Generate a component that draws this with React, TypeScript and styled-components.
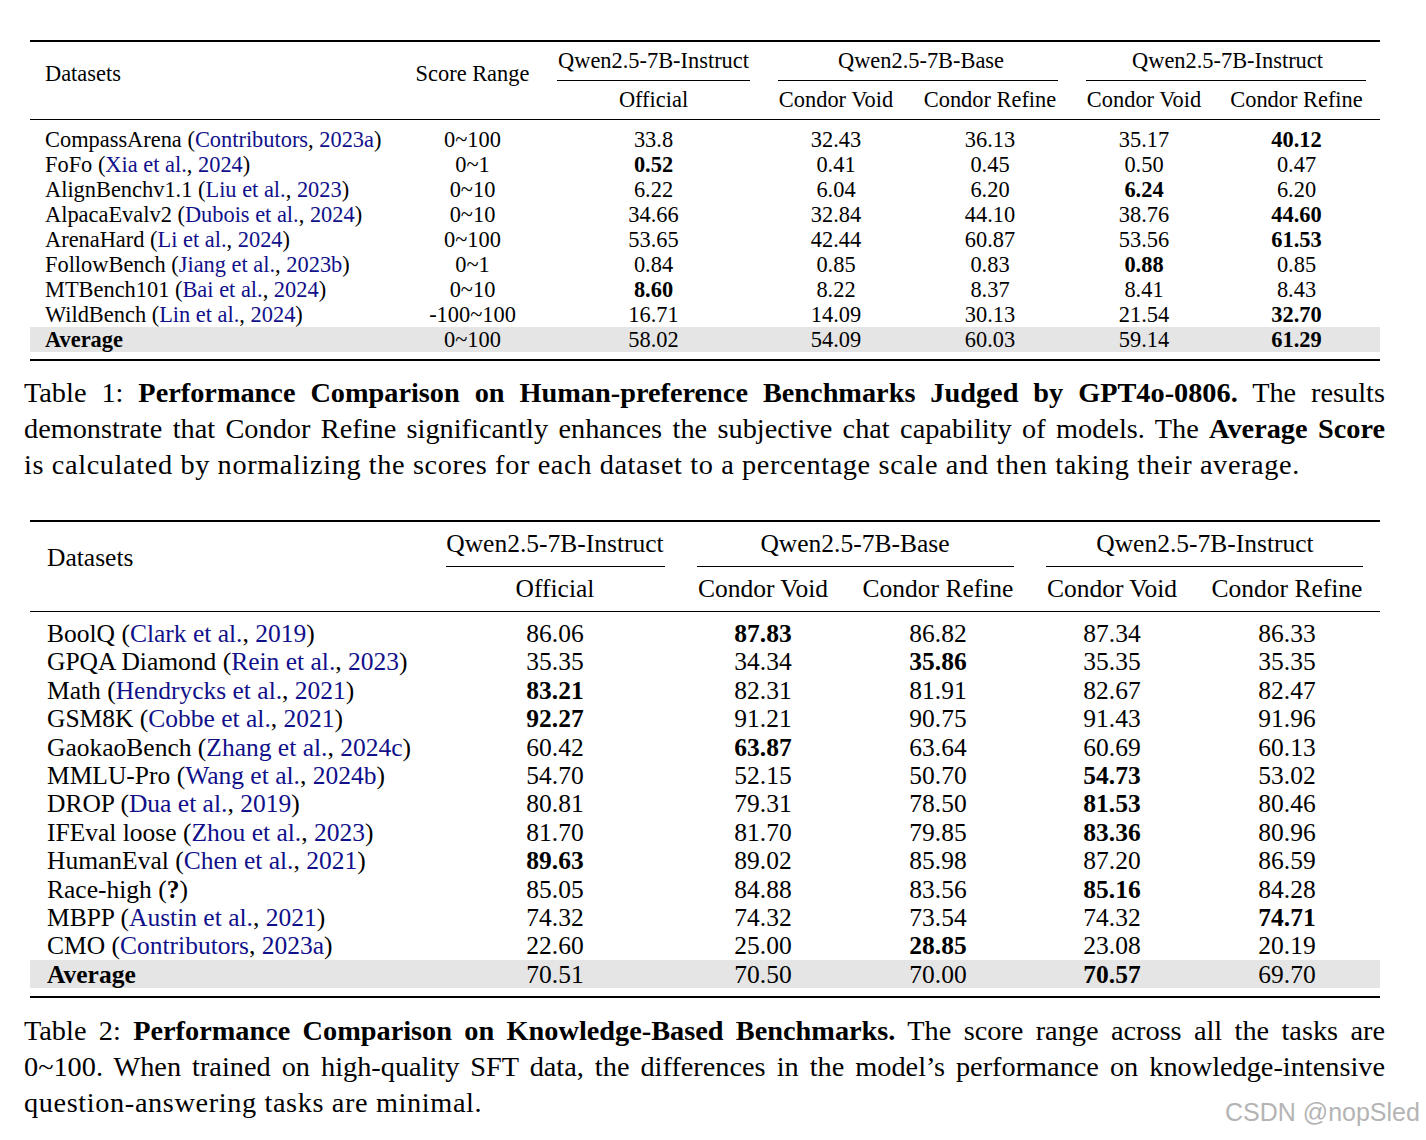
import styled, { createGlobalStyle } from "styled-components";

const GlobalStyle = createGlobalStyle`
  html, body {
    margin: 0;
    padding: 0;
    background: #ffffff;
  }
  body {
    font-family: "Liberation Serif", "Times New Roman", serif;
    color: #000000;
  }
`;

const Page = styled.div`
  position: relative;
  width: 1426px;
  height: 1140px;
  padding-top: 40px;
  box-sizing: border-box;
  overflow: hidden;
`;

const Table = styled.div<{ $size: number; $gap?: number }>`
  width: 1350px;
  margin: ${(p) => p.$gap || 0}px 0 0 30px;
  border-top: 2px solid #000;
  border-bottom: 2px solid #000;
  font-size: ${(p) => p.$size}px;
`;

const Head = styled.div<{ $cols: string; $row: number }>`
  display: grid;
  grid-template-columns: ${(p) => p.$cols};
  grid-template-rows: ${(p) => p.$row}px 1px ${(p) => p.$row}px;
  border-bottom: 1px solid #000;
`;

const HeadLabel = styled.div<{ $col: number; $top: number; $pad?: number }>`
  grid-column: ${(p) => p.$col};
  grid-row: 1 / 4;
  padding-top: ${(p) => p.$top}px;
  padding-left: ${(p) => p.$pad || 0}px;
  line-height: 26px;
  text-align: ${(p) => (p.$pad ? "left" : "center")};
  white-space: nowrap;
`;

const GroupTitle = styled.div<{ $span: string }>`
  grid-column: ${(p) => p.$span};
  grid-row: 1;
  display: flex;
  align-items: center;
  justify-content: center;
  white-space: nowrap;
`;

const CmidRule = styled.div<{ $span: string; $l: number; $r: number }>`
  grid-column: ${(p) => p.$span};
  grid-row: 2;
  margin: 0 ${(p) => p.$r}px 0 ${(p) => p.$l}px;
  background: #000;
`;

const SubTitle = styled.div<{ $col: number }>`
  grid-column: ${(p) => p.$col};
  grid-row: 3;
  display: flex;
  align-items: center;
  justify-content: center;
  white-space: nowrap;
`;

const Body = styled.div<{ $top: number; $bottom: number }>`
  padding: ${(p) => p.$top}px 0 ${(p) => p.$bottom}px;
`;

const Row = styled.div<{ $cols: string; $h: number; $shade?: boolean }>`
  display: grid;
  grid-template-columns: ${(p) => p.$cols};
  height: ${(p) => p.$h}px;
  align-items: center;
  background: ${(p) => (p.$shade ? "#e5e5e5" : "transparent")};
`;

const NameCell = styled.div<{ $pad: number; $bold?: boolean }>`
  padding-left: ${(p) => p.$pad}px;
  font-weight: ${(p) => (p.$bold ? 700 : 400)};
  white-space: nowrap;
`;

const Cell = styled.div<{ $bold?: boolean }>`
  text-align: center;
  font-weight: ${(p) => (p.$bold ? 700 : 400)};
  white-space: nowrap;
`;

const Cite = styled.span`
  color: #10108a;
`;

const Caption = styled.div<{ $gap: number }>`
  width: 1361px;
  margin: ${(p) => p.$gap}px 0 0 24px;
  font-size: 28.3px;
  line-height: 36px;
`;

const Line = styled.div<{ $last?: boolean }>`
  height: 36px;
  hyphens: none;
  text-align: ${(p) => (p.$last ? "left" : "justify")};
  text-align-last: ${(p) => (p.$last ? "left" : "justify")};
  letter-spacing: ${(p) => (p.$last ? "0.62px" : "0")};
  white-space: ${(p) => (p.$last ? "nowrap" : "normal")};
`;

const Watermark = styled.div`
  position: absolute;
  left: 1225px;
  top: 1097px;
  font-family: "Liberation Sans", Arial, sans-serif;
  font-size: 25px;
  line-height: 30px;
  color: #b4b4b4;
  white-space: nowrap;
`;

type Entry = {
  name: string;
  cite?: [string, string];
  unknown?: boolean;
  avg?: boolean;
  vals: (string | [string])[];
};

function DatasetName({ e }: { e: Entry }) {
  if (e.avg) return <>{e.name}</>;
  if (e.unknown)
    return (
      <>
        {e.name} (<b>?</b>)
      </>
    );
  return (
    <>
      {e.name} (<Cite>{e.cite![0]}</Cite>, <Cite>{e.cite![1]}</Cite>)
    </>
  );
}

const t1Cols = "375px 135px 227px 138px 170px 138px 167px";
const t2Cols = "400px 250px 166px 184px 164px 186px";

const t1Rows: Entry[] = [
  { name: "CompassArena", cite: ["Contributors", "2023a"], vals: ["0~100", "33.8", "32.43", "36.13", "35.17", ["40.12"]] },
  { name: "FoFo", cite: ["Xia et al.", "2024"], vals: ["0~1", ["0.52"], "0.41", "0.45", "0.50", "0.47"] },
  { name: "AlignBenchv1.1", cite: ["Liu et al.", "2023"], vals: ["0~10", "6.22", "6.04", "6.20", ["6.24"], "6.20"] },
  { name: "AlpacaEvalv2", cite: ["Dubois et al.", "2024"], vals: ["0~10", "34.66", "32.84", "44.10", "38.76", ["44.60"]] },
  { name: "ArenaHard", cite: ["Li et al.", "2024"], vals: ["0~100", "53.65", "42.44", "60.87", "53.56", ["61.53"]] },
  { name: "FollowBench", cite: ["Jiang et al.", "2023b"], vals: ["0~1", "0.84", "0.85", "0.83", ["0.88"], "0.85"] },
  { name: "MTBench101", cite: ["Bai et al.", "2024"], vals: ["0~10", ["8.60"], "8.22", "8.37", "8.41", "8.43"] },
  { name: "WildBench", cite: ["Lin et al.", "2024"], vals: ["-100~100", "16.71", "14.09", "30.13", "21.54", ["32.70"]] },
  { name: "Average", avg: true, vals: ["0~100", "58.02", "54.09", "60.03", "59.14", ["61.29"]] },
];

const t2Rows: Entry[] = [
  { name: "BoolQ", cite: ["Clark et al.", "2019"], vals: ["86.06", ["87.83"], "86.82", "87.34", "86.33"] },
  { name: "GPQA Diamond", cite: ["Rein et al.", "2023"], vals: ["35.35", "34.34", ["35.86"], "35.35", "35.35"] },
  { name: "Math", cite: ["Hendrycks et al.", "2021"], vals: [["83.21"], "82.31", "81.91", "82.67", "82.47"] },
  { name: "GSM8K", cite: ["Cobbe et al.", "2021"], vals: [["92.27"], "91.21", "90.75", "91.43", "91.96"] },
  { name: "GaokaoBench", cite: ["Zhang et al.", "2024c"], vals: ["60.42", ["63.87"], "63.64", "60.69", "60.13"] },
  { name: "MMLU-Pro", cite: ["Wang et al.", "2024b"], vals: ["54.70", "52.15", "50.70", ["54.73"], "53.02"] },
  { name: "DROP", cite: ["Dua et al.", "2019"], vals: ["80.81", "79.31", "78.50", ["81.53"], "80.46"] },
  { name: "IFEval loose", cite: ["Zhou et al.", "2023"], vals: ["81.70", "81.70", "79.85", ["83.36"], "80.96"] },
  { name: "HumanEval", cite: ["Chen et al.", "2021"], vals: [["89.63"], "89.02", "85.98", "87.20", "86.59"] },
  { name: "Race-high", unknown: true, vals: ["85.05", "84.88", "83.56", ["85.16"], "84.28"] },
  { name: "MBPP", cite: ["Austin et al.", "2021"], vals: ["74.32", "74.32", "73.54", "74.32", ["74.71"]] },
  { name: "CMO", cite: ["Contributors", "2023a"], vals: ["22.60", "25.00", ["28.85"], "23.08", "20.19"] },
  { name: "Average", avg: true, vals: ["70.51", "70.50", "70.00", ["70.57"], "69.70"] },
];

function BodyRows({ rows, cols, h, pad }: { rows: Entry[]; cols: string; h: number; pad: number }) {
  return (
    <>
      {rows.map((e) => (
        <Row key={e.name} $cols={cols} $h={h} $shade={e.avg}>
          <NameCell $pad={pad} $bold={e.avg}>
            <DatasetName e={e} />
          </NameCell>
          {e.vals.map((v, i) =>
            Array.isArray(v) ? (
              <Cell key={i} $bold>
                {v[0]}
              </Cell>
            ) : (
              <Cell key={i}>{v}</Cell>
            )
          )}
        </Row>
      ))}
    </>
  );
}

export default function App() {
  return (
    <Page>
      <GlobalStyle />
      <Table $size={22.4}>
        <Head $cols={t1Cols} $row={38}>
          <HeadLabel $col={1} $top={19} $pad={15}>
            Datasets
          </HeadLabel>
          <HeadLabel $col={2} $top={19}>
            Score Range
          </HeadLabel>
          <GroupTitle $span="3">Qwen2.5-7B-Instruct</GroupTitle>
          <GroupTitle $span="4 / 6">Qwen2.5-7B-Base</GroupTitle>
          <GroupTitle $span="6 / 8">Qwen2.5-7B-Instruct</GroupTitle>
          <CmidRule $span="3" $l={17} $r={17} />
          <CmidRule $span="4 / 6" $l={11} $r={17} />
          <CmidRule $span="6 / 8" $l={11} $r={14} />
          <SubTitle $col={3}>Official</SubTitle>
          <SubTitle $col={4}>Condor Void</SubTitle>
          <SubTitle $col={5}>Condor Refine</SubTitle>
          <SubTitle $col={6}>Condor Void</SubTitle>
          <SubTitle $col={7}>Condor Refine</SubTitle>
        </Head>
        <Body $top={7} $bottom={7}>
          <BodyRows rows={t1Rows} cols={t1Cols} h={25} pad={15} />
        </Body>
      </Table>
      <Caption $gap={14}>
        <Line>
          Table 1: <b>Performance Comparison on Human-preference Benchmarks Judged by GPT4o-0806.</b> The results
        </Line>
        <Line>
          demonstrate that Condor Refine significantly enhances the subjective chat capability of models. The{" "}
          <b>Average Score</b>
        </Line>
        <Line $last>
          is calculated by normalizing the scores for each dataset to a percentage scale and then taking their average.
        </Line>
      </Caption>

      <Table $size={25.5} $gap={37}>
        <Head $cols={t2Cols} $row={44}>
          <HeadLabel $col={1} $top={23} $pad={17}>
            Datasets
          </HeadLabel>
          <GroupTitle $span="2">Qwen2.5-7B-Instruct</GroupTitle>
          <GroupTitle $span="3 / 5">Qwen2.5-7B-Base</GroupTitle>
          <GroupTitle $span="5 / 7">Qwen2.5-7B-Instruct</GroupTitle>
          <CmidRule $span="2" $l={16} $r={15} />
          <CmidRule $span="3 / 5" $l={17} $r={16} />
          <CmidRule $span="5 / 7" $l={16} $r={17} />
          <SubTitle $col={2}>Official</SubTitle>
          <SubTitle $col={3}>Condor Void</SubTitle>
          <SubTitle $col={4}>Condor Refine</SubTitle>
          <SubTitle $col={5}>Condor Void</SubTitle>
          <SubTitle $col={6}>Condor Refine</SubTitle>
        </Head>
        <Body $top={7} $bottom={8}>
          <BodyRows rows={t2Rows} cols={t2Cols} h={28.4} pad={17} />
        </Body>
      </Table>
      <Caption $gap={15}>
        <Line>
          Table 2: <b>Performance Comparison on Knowledge-Based Benchmarks.</b> The score range across all the tasks are
        </Line>
        <Line>
          0~100. When trained on high-quality SFT data, the differences in the model’s performance on knowledge&#8209;intensive
        </Line>
        <Line $last>question-answering tasks are minimal.</Line>
      </Caption>
      <Watermark>CSDN @nopSled</Watermark>
    </Page>
  );
}
